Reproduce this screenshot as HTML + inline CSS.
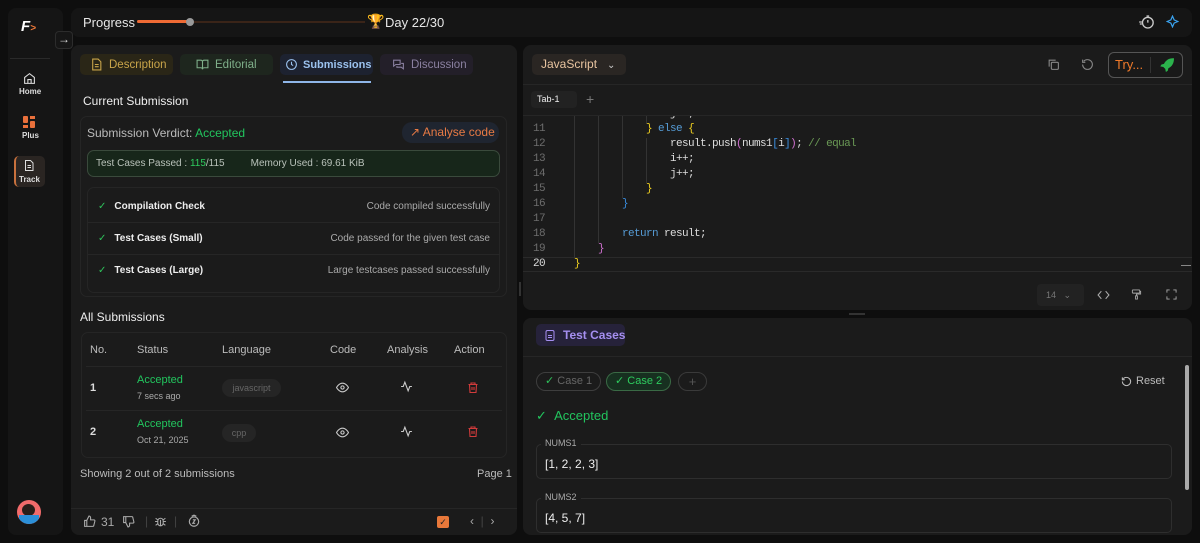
<!DOCTYPE html>
<html><head><style>
*{box-sizing:border-box;margin:0;padding:0;white-space:nowrap}
body{width:1200px;height:543px;background:#0e0e0e;font-family:"Liberation Sans",sans-serif;color:#ddd;position:relative;overflow:hidden;font-size:12px}
.abs{position:absolute}
.panel{position:absolute;background:#1b1b1b;border-radius:8px}
.mono{font-family:"Liberation Mono",monospace}
svg{display:block;flex:none}
.tab{position:absolute;top:54px;height:21px;border-radius:5px;font-size:11.5px;display:flex;align-items:center;gap:6px;padding-left:10px}
.row{position:absolute;left:88px;width:412px;height:32px;border-top:1px solid #262626;display:flex;align-items:center;font-size:10px;padding-right:10px}
.code div{height:15px;line-height:15px;white-space:pre}
</style></head><body>
<!-- sidebar -->
<div class="panel" style="left:8px;top:8px;width:55px;height:527px;background:#151515"></div>
<div class="abs" style="left:21px;top:18px;font-weight:bold;font-style:italic;color:#fff;font-size:15px">F<span style="color:#f07a3a;font-size:10px">&gt;</span></div>
<div class="abs" style="left:10px;top:58px;width:40px;height:1px;background:#2a2a2a"></div>
<svg class="abs" style="left:23px;top:72px" width="13" height="13" viewBox="0 0 24 24" fill="none" stroke="#ddd" stroke-width="2"><path d="M3 10l9-7 9 7v11H3z M9 21v-7h6v7"/></svg>
<div class="abs" style="left:19px;top:87px;font-size:8px;font-weight:bold;color:#ddd">Home</div>
<div class="abs" style="left:23px;top:116px;width:5px;height:7px;background:#e9703b;border-radius:1px"></div>
<div class="abs" style="left:30px;top:116px;width:5px;height:3px;background:#e9703b"></div>
<div class="abs" style="left:30px;top:121px;width:5px;height:7px;background:#e9703b;border-radius:1px"></div>
<div class="abs" style="left:23px;top:125px;width:5px;height:3px;background:#e9703b"></div>
<div class="abs" style="left:22px;top:131px;font-size:8px;font-weight:bold">Plus</div>
<div class="abs" style="left:14px;top:156px;width:31px;height:31px;background:#2a2522;border-radius:5px;border-left:2px solid #c8713d"></div>
<svg class="abs" style="left:23px;top:159px" width="12" height="13" viewBox="0 0 24 24" fill="none" stroke="#ddd" stroke-width="2"><path d="M5 2h10l5 5v15H5z M9 12h7 M9 16h7"/></svg>
<div class="abs" style="left:19px;top:175px;font-size:8px;font-weight:bold">Track</div>
<div class="abs" style="left:17px;top:500px;width:24px;height:24px;border-radius:50%;background:#f26b6b;overflow:hidden"><div style="position:absolute;left:5px;top:4px;width:13px;height:12px;border-radius:50%;background:#2a1e1a"></div><div style="position:absolute;left:2px;top:15px;width:20px;height:9px;background:#2b8fd8"></div></div>
<!-- top bar -->
<div class="panel" style="left:71px;top:8px;width:1121px;height:29px;background:#151515"></div>
<div class="abs" style="left:83px;top:15px;font-size:13px;color:#e6e6e6">Progress</div>
<div class="abs" style="left:137px;top:21px;width:228px;height:2px;background:#3a2418"></div>
<div class="abs" style="left:137px;top:20px;width:53px;height:3px;background:#ee6a34;border-radius:2px"></div>
<div class="abs" style="left:186px;top:18px;width:8px;height:8px;background:#999;border-radius:50%"></div>
<div class="abs" style="left:367px;top:13px;font-size:14px;color:#f3b52a">🏆</div>
<div class="abs" style="left:385px;top:15px;font-size:13px;color:#e6e6e6">Day 22/30</div>
<svg class="abs" style="left:1138px;top:14px" width="17" height="16" viewBox="0 0 24 24" fill="none" stroke="#ccc" stroke-width="2"><circle cx="14" cy="13" r="8"/><path d="M14 9v4 M12 3h4 M1 12h4 M2 15h3"/></svg>
<svg class="abs" style="left:1166px;top:15px" width="13" height="13" viewBox="0 0 24 24" fill="none" stroke="#3aa3f0" stroke-width="2.2"><path d="M12 2l3 7 7 3-7 3-3 7-3-7-7-3 7-3z"/></svg>
<div class="abs" style="left:55px;top:31px;width:18px;height:18px;background:#161616;border:1px solid #2c2c2c;border-radius:4px;color:#ddd;font-size:12px;text-align:center;line-height:15px">→</div>
<!-- left panel -->
<div class="panel" style="left:71px;top:45px;width:446px;height:490px"></div>
<div class="tab" style="left:80px;width:93px;background:#2a2617;color:#c9a54a"><svg width="13" height="13" viewBox="0 0 24 24" fill="none" stroke="#c9a54a" stroke-width="2"><path d="M5 2h10l5 5v15H5z M9 12h7 M9 16h7"/></svg>Description</div>
<div class="tab" style="left:180px;width:93px;background:#1e261e;color:#7faf8a;padding-left:16px"><svg width="13" height="13" viewBox="0 0 24 24" fill="none" stroke="#7faf8a" stroke-width="2"><path d="M2 4h7a3 3 0 013 3v14a3 3 0 00-3-3H2z M22 4h-7a3 3 0 00-3 3v14a3 3 0 013-3h7z"/></svg>Editorial</div>
<div class="tab" style="left:280px;width:93px;background:#1d2230;color:#9bc2ee;font-weight:bold;padding-left:5px;font-size:11px;gap:5px"><svg width="13" height="13" viewBox="0 0 24 24" fill="none" stroke="#9bc2ee" stroke-width="2"><circle cx="12" cy="12" r="9"/><path d="M12 7v5l3 2"/></svg>Submissions</div>
<div class="abs" style="left:283px;top:81px;width:88px;height:2px;background:#8fb6e8"></div>
<div class="tab" style="left:380px;width:93px;background:#231f29;color:#8a80a0;padding-left:12px"><svg width="13" height="13" viewBox="0 0 24 24" fill="none" stroke="#8a80a0" stroke-width="2"><path d="M3 4h12v8H7l-4 3z M9 15v2h8l4 3V10h-4"/></svg>Discussion</div>
<div class="abs" style="left:83px;top:94px;font-size:12px;color:#eee">Current Submission</div>
<div class="abs" style="left:80px;top:116px;width:427px;height:181px;border:1px solid #252525;border-radius:7px"></div>
<div class="abs" style="left:87px;top:126px;font-size:12px;color:#bbb">Submission Verdict: <span style="color:#22c55e">Accepted</span></div>
<div class="abs" style="left:402px;top:122px;width:97px;height:21px;background:#1f2530;border-radius:10px;color:#e87a44;font-size:12px;line-height:21px;padding-left:8px">↗ Analyse code</div>
<div class="abs" style="left:87px;top:150px;width:413px;height:27px;background:#17261a;border:1px solid #3a4a3c;border-radius:7px;font-size:10px;color:#b9c2ba;line-height:25px;padding-left:8px">Test Cases Passed : <span style="color:#2ecc5e">115</span>/115<span style="margin-left:26px">Memory Used : 69.61 KiB</span></div>
<div class="abs" style="left:87px;top:187px;width:413px;height:106px;border:1px solid #252525;border-radius:7px"></div>
<div class="row" style="top:190px;border-top:none"><span style="color:#2ec05a;margin:0 8px 0 10px">✓</span><b style="color:#eee">Compilation Check</b><span style="margin-left:auto;color:#aaa">Code compiled successfully</span></div>
<div class="row" style="top:222px"><span style="color:#2ec05a;margin:0 8px 0 10px">✓</span><b style="color:#eee">Test Cases (Small)</b><span style="margin-left:auto;color:#aaa">Code passed for the given test case</span></div>
<div class="row" style="top:254px"><span style="color:#2ec05a;margin:0 8px 0 10px">✓</span><b style="color:#eee">Test Cases (Large)</b><span style="margin-left:auto;color:#aaa">Large testcases passed successfully</span></div>
<div class="abs" style="left:80px;top:310px;font-size:12px;color:#eee">All Submissions</div>
<div class="abs" style="left:81px;top:332px;width:426px;height:126px;border:1px solid #252525;border-radius:7px"></div>
<div class="abs" style="top:344px;font-size:11px;color:#bbb;left:90px">No.</div>
<div class="abs" style="top:344px;font-size:11px;color:#bbb;left:137px">Status</div>
<div class="abs" style="top:344px;font-size:11px;color:#bbb;left:222px">Language</div>
<div class="abs" style="top:344px;font-size:11px;color:#bbb;left:330px">Code</div>
<div class="abs" style="top:344px;font-size:11px;color:#bbb;left:387px">Analysis</div>
<div class="abs" style="top:344px;font-size:11px;color:#bbb;left:454px">Action</div>
<div class="abs" style="left:86px;top:366px;width:416px;height:1px;background:#262626"></div>
<div class="abs" style="left:86px;top:410px;width:416px;height:1px;background:#262626"></div>
<div class="abs" style="left:90px;top:382px;font-weight:bold;font-size:11px">1</div>
<div class="abs" style="left:137px;top:374px;font-size:11px;color:#22c55e">Accepted</div>
<div class="abs" style="left:137px;top:391px;font-size:9px;color:#aaa">7 secs ago</div>
<div class="abs" style="left:222px;top:379px;width:59px;height:18px;border-radius:9px;background:#252525;color:#666;font-size:9px;text-align:center;line-height:18px">javascript</div>
<div class="abs" style="left:90px;top:426px;font-weight:bold;font-size:11px">2</div>
<div class="abs" style="left:137px;top:418px;font-size:11px;color:#22c55e">Accepted</div>
<div class="abs" style="left:137px;top:435px;font-size:9px;color:#aaa">Oct 21, 2025</div>
<div class="abs" style="left:222px;top:424px;width:34px;height:18px;border-radius:9px;background:#252525;color:#666;font-size:9px;text-align:center;line-height:18px">cpp</div>
<svg class="abs" style="left:336px;top:382px" width="13" height="11" viewBox="0 0 24 20" fill="none" stroke="#ccc" stroke-width="2"><path d="M1 10s4-8 11-8 11 8 11 8-4 8-11 8S1 10 1 10z"/><circle cx="12" cy="10" r="3"/></svg>
<svg class="abs" style="left:336px;top:427px" width="13" height="11" viewBox="0 0 24 20" fill="none" stroke="#ccc" stroke-width="2"><path d="M1 10s4-8 11-8 11 8 11 8-4 8-11 8S1 10 1 10z"/><circle cx="12" cy="10" r="3"/></svg>
<svg class="abs" style="left:400px;top:380px" width="13" height="13" viewBox="0 0 24 24" fill="none" stroke="#ccc" stroke-width="2"><path d="M2 12h4l3-8 6 16 3-8h4"/></svg>
<svg class="abs" style="left:400px;top:425px" width="13" height="13" viewBox="0 0 24 24" fill="none" stroke="#ccc" stroke-width="2"><path d="M2 12h4l3-8 6 16 3-8h4"/></svg>
<svg class="abs" style="left:467px;top:381px" width="12" height="13" viewBox="0 0 24 24" fill="none" stroke="#d23b3b" stroke-width="2.2"><path d="M3 6h18 M8 6V3h8v3 M5 6l1 16h12l1-16 M10 11v6 M14 11v6"/></svg>
<svg class="abs" style="left:467px;top:425px" width="12" height="13" viewBox="0 0 24 24" fill="none" stroke="#d23b3b" stroke-width="2.2"><path d="M3 6h18 M8 6V3h8v3 M5 6l1 16h12l1-16 M10 11v6 M14 11v6"/></svg>
<div class="abs" style="left:80px;top:468px;font-size:11px;color:#bbb">Showing 2 out of 2 submissions</div>
<div class="abs" style="left:477px;top:468px;font-size:11px;color:#bbb">Page 1</div>
<div class="abs" style="left:71px;top:508px;width:446px;height:1px;background:#262626"></div>
<svg class="abs" style="left:83px;top:515px" width="13" height="13" viewBox="0 0 24 24" fill="none" stroke="#aaa" stroke-width="2"><path d="M7 10v11H3V10z M7 10l4-8a3 3 0 013 3v4h6a2 2 0 012 2l-2 8a2 2 0 01-2 2H7"/></svg>
<div class="abs" style="left:101px;top:515px;font-size:12px;color:#aaa">31</div>
<svg class="abs" style="left:122px;top:515px" width="13" height="13" viewBox="0 0 24 24" fill="none" stroke="#aaa" stroke-width="2"><path d="M7 14V3H3v11z M7 14l4 8a3 3 0 003-3v-4h6a2 2 0 002-2l-2-8a2 2 0 00-2-2H7"/></svg>
<div class="abs" style="left:145px;top:514px;font-size:12px;color:#444">|</div>
<svg class="abs" style="left:154px;top:515px" width="13" height="13" viewBox="0 0 24 24" fill="none" stroke="#aaa" stroke-width="2"><rect x="7" y="6" width="10" height="14" rx="5"/><path d="M2 12h5 M17 12h5 M3 6l4 3 M21 6l-4 3 M3 19l4-3 M21 19l-4-3 M12 9v11"/></svg>
<div class="abs" style="left:174px;top:514px;font-size:12px;color:#444">|</div>
<svg class="abs" style="left:187px;top:514px" width="14" height="14" viewBox="0 0 24 24" fill="none" stroke="#aaa" stroke-width="2"><circle cx="12" cy="13" r="8"/><path d="M8 4l4-2 4 2 M10 10h4l-4 6h4"/></svg>
<div class="abs" style="left:437px;top:516px;width:12px;height:12px;background:#e8783a;border-radius:2px;color:#222;font-size:9px;text-align:center;line-height:12px">✓</div>
<div class="abs" style="left:470px;top:514px;font-size:12px;color:#aaa">‹ &nbsp;<span style="color:#444">|</span>&nbsp; ›</div>
<div class="abs" style="left:519px;top:282px;width:2px;height:14px;background:#333"></div>
<!-- editor -->
<div class="panel" style="left:523px;top:45px;width:669px;height:265px"></div>
<div class="abs" style="left:532px;top:54px;width:94px;height:21px;background:#2a2623;border-radius:5px;font-size:12px;color:#e8c4a0;line-height:21px;padding-left:9px">JavaScript &nbsp;&nbsp;<span style="color:#ccc;font-size:10px">⌄</span></div>
<svg class="abs" style="left:1047px;top:58px" width="13" height="13" viewBox="0 0 24 24" fill="none" stroke="#888" stroke-width="2"><rect x="8" y="8" width="13" height="13" rx="2"/><path d="M4 16V4h12"/></svg>
<svg class="abs" style="left:1081px;top:58px" width="13" height="13" viewBox="0 0 24 24" fill="none" stroke="#888" stroke-width="2"><path d="M3 12a9 9 0 109-9 9 9 0 00-7 3 M3 3v5h5"/></svg>
<div class="abs" style="left:1108px;top:52px;width:75px;height:26px;border:1px solid #555;border-radius:6px;background:#191919"></div>
<div class="abs" style="left:1115px;top:57px;font-size:13px;color:#ef7a2a">Try...</div>
<div class="abs" style="left:1150px;top:57px;width:1px;height:16px;background:#333"></div>
<svg class="abs" style="left:1159px;top:57px" width="15" height="15" viewBox="0 0 24 24" fill="#2bb24c"><path d="M22 2c-6 0-11 3-14 9l-4 1-2 3 5 1 3 3 1 5 3-2 1-4c6-3 9-8 9-16z"/></svg>
<div class="abs" style="left:523px;top:84px;width:669px;height:1px;background:#262626"></div>
<div class="abs" style="left:531px;top:91px;width:46px;height:17px;background:#222;border-radius:4px;font-size:9px;color:#eee;line-height:17px;padding-left:6px">Tab-1</div>
<div class="abs" style="left:586px;top:91px;font-size:14px;color:#777">+</div>
<div class="abs" style="left:523px;top:115px;width:669px;height:1px;background:#262626"></div>
<div class="abs" style="left:523px;top:257px;width:669px;height:15px;border-top:1px solid #2a2a2a;border-bottom:1px solid #2a2a2a"></div>
<div class="abs mono code" style="left:533px;top:116px;font-size:11px;letter-spacing:-0.6px;color:#6d6d6d;width:28px;height:156px;overflow:hidden">
<div style="margin-top:-9px">10</div><div>11</div><div>12</div><div>13</div><div>14</div><div>15</div><div>16</div><div>17</div><div>18</div><div>19</div><div style="color:#ddd">20</div></div>
<div class="abs" style="left:574px;top:116px;width:1px;height:142px;background:#333"></div>
<div class="abs" style="left:598px;top:116px;width:1px;height:127px;background:#333"></div>
<div class="abs" style="left:622px;top:116px;width:1px;height:82px;background:#333"></div>
<div class="abs" style="left:646px;top:116px;width:1px;height:8px;background:#333"></div>
<div class="abs" style="left:646px;top:138px;width:1px;height:45px;background:#333"></div>
<div class="abs mono code" style="left:574px;top:116px;font-size:11px;letter-spacing:-0.6px;color:#ddd;height:156px;overflow:hidden">
<div style="margin-top:-9px">                j++;</div>
<div>            <span style="color:#f0d020">}</span> <span style="color:#569cd6">else</span> <span style="color:#f0d020">{</span></div>
<div>                result.push<span style="color:#d070d0">(</span>nums1<span style="color:#3a8ee0">[</span>i<span style="color:#3a8ee0">]</span><span style="color:#d070d0">)</span>; <span style="color:#6a9955">// equal</span></div>
<div>                i++;</div>
<div>                j++;</div>
<div>            <span style="color:#f0d020">}</span></div>
<div>        <span style="color:#3a8ee0">}</span></div>
<div> </div>
<div>        <span style="color:#569cd6">return</span> result;</div>
<div>    <span style="color:#d070d0">}</span></div>
<div><span style="color:#f0d020">}</span></div></div>
<div class="abs" style="left:1181px;top:265px;width:10px;height:1px;background:#888"></div>
<div class="abs" style="left:1037px;top:284px;width:47px;height:22px;background:#222;border-radius:4px;font-size:9px;color:#777;line-height:22px;padding-left:9px">14 &nbsp; ⌄</div>
<svg class="abs" style="left:1097px;top:290px" width="13" height="10" viewBox="0 0 24 18" fill="none" stroke="#aaa" stroke-width="2"><path d="M8 2L2 9l6 7 M16 2l6 7-6 7"/></svg>
<svg class="abs" style="left:1131px;top:288px" width="11" height="13" viewBox="0 0 24 24" fill="none" stroke="#aaa" stroke-width="2"><rect x="3" y="2" width="16" height="7" rx="1"/><path d="M19 5h2v6H12v4 M10 15h4v7h-4z"/></svg>
<svg class="abs" style="left:1166px;top:289px" width="11" height="11" viewBox="0 0 24 24" fill="none" stroke="#aaa" stroke-width="2"><path d="M2 8V2h6 M16 2h6v6 M22 16v6h-6 M8 22H2v-6"/></svg>
<div class="abs" style="left:849px;top:313px;width:16px;height:2px;background:#333"></div>
<!-- test cases -->
<div class="panel" style="left:523px;top:318px;width:669px;height:217px"></div>
<div class="abs" style="left:536px;top:324px;width:89px;height:22px;background:#26223a;border-radius:5px;font-size:12px;color:#a58ff0;line-height:22px;padding-left:27px;font-weight:bold">Test Cases</div>
<svg class="abs" style="left:544px;top:329px" width="12" height="13" viewBox="0 0 24 24" fill="none" stroke="#a58ff0" stroke-width="2"><rect x="4" y="2" width="16" height="20" rx="3"/><path d="M8 12h8 M8 16h8"/></svg>
<div class="abs" style="left:523px;top:356px;width:669px;height:1px;background:#262626"></div>
<div class="abs" style="left:536px;top:372px;width:65px;height:19px;border:1px solid #3e3e3e;border-radius:10px;font-size:11px;color:#666;line-height:17px;padding-left:8px"><span style="color:#2ec05a">✓</span> Case 1</div>
<div class="abs" style="left:606px;top:372px;width:65px;height:19px;border:1px solid #3a6a45;background:#173020;border-radius:10px;font-size:11px;color:#2ecc5e;line-height:17px;padding-left:8px">✓ Case 2</div>
<div class="abs" style="left:678px;top:372px;width:29px;height:19px;border:1px solid #3a3a3a;border-radius:10px;font-size:13px;color:#555;line-height:17px;text-align:center">+</div>
<svg class="abs" style="left:1121px;top:376px" width="11" height="11" viewBox="0 0 24 24" fill="none" stroke="#bbb" stroke-width="2.4"><path d="M3 12a9 9 0 109-9 9 9 0 00-7 3 M3 3v5h5"/></svg>
<div class="abs" style="left:1136px;top:375px;font-size:11px;color:#bbb">Reset</div>
<div class="abs" style="left:536px;top:408px;font-size:13px;color:#22c55e">✓ &nbsp;Accepted</div>
<div class="abs" style="left:536px;top:444px;width:636px;height:35px;border:1px solid #2e2e2e;border-radius:5px"></div>
<div class="abs" style="left:541px;top:438px;font-size:9px;color:#aaa;background:#1b1b1b;padding:0 4px">NUMS1</div>
<div class="abs" style="left:545px;top:457px;font-size:12px;color:#eee">[1, 2, 2, 3]</div>
<div class="abs" style="left:536px;top:498px;width:636px;height:35px;border:1px solid #2e2e2e;border-radius:5px"></div>
<div class="abs" style="left:541px;top:492px;font-size:9px;color:#aaa;background:#1b1b1b;padding:0 4px">NUMS2</div>
<div class="abs" style="left:545px;top:511px;font-size:12px;color:#eee">[4, 5, 7]</div>
<div class="abs" style="left:1185px;top:365px;width:4px;height:125px;background:#aaa;border-radius:2px"></div>
</body></html>
